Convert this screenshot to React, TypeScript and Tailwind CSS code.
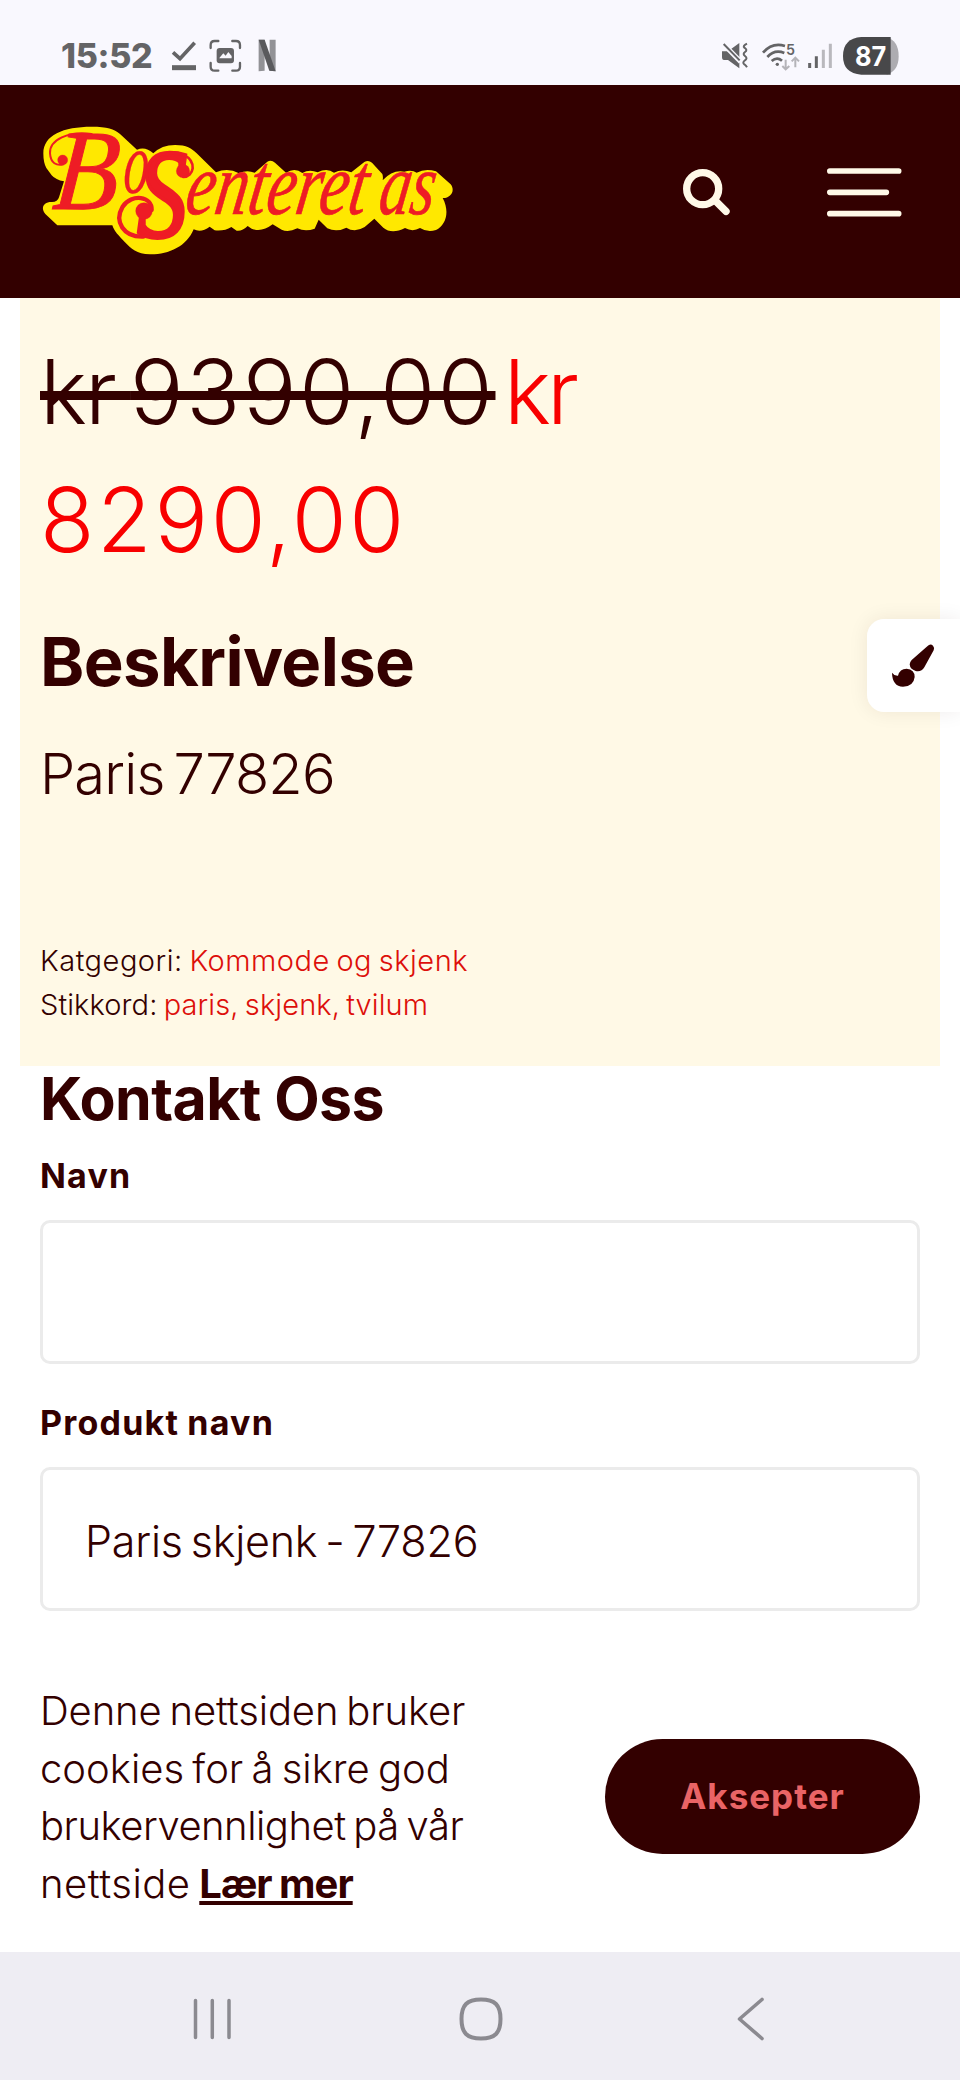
import { ReactNode } from "react"

function StatusBar() {
  return (
    <div className="flex h-[85px] items-center justify-between bg-[#f9f8fe] pt-[26px] pr-[60px] pl-[61px]">
      <div className="flex items-center">
        <span className="w-[109px] text-[34px] leading-[36px] font-extrabold tracking-[-0.3px] text-[#646466]">15:52</span>
        <svg viewBox="390 50 325 110" className="h-[36.7px] w-[108.3px]" fill="none">
          <path d="M399 96 L420 115 L464 67" stroke="#646466" strokeWidth="11" />
          <path d="M396 142 H468" stroke="#646466" strokeWidth="15" />
          <path
            d="M512 83 V74 Q512 62 524 62 H535 M577 62 H588 Q600 62 600 74 V83 M600 128 V139 Q600 151 588 151 H577 M535 151 H524 Q512 151 512 139 V128"
            stroke="#646466"
            strokeWidth="7"
            strokeLinecap="round"
          />
          <rect x="530" y="83" width="52" height="46" rx="9" fill="#646466" />
          <path d="M538 113 L550 99 L557 106 L565 95 L575 107 V114 H538 Z" fill="#f9f8fe" />
          <path d="M656 58 H674 V151 L656 153 Z" fill="#929296" />
          <path d="M689 58 H707 V153 L689 151 Z" fill="#929296" />
          <path d="M656 58 H674 L707 153 L688 151 Z" fill="#5a5a5d" />
        </svg>
      </div>
      <svg viewBox="60 45 540 120" className="h-[40px] w-[180px]" fill="none">
        <path d="M66 91 H84 L118 66 V142 L84 117 H72 Q66 117 66 108 Z" fill="#646466" />
        <path d="M70 69 L122 122" stroke="#f9f8fe" strokeWidth="15" />
        <path d="M71 69 L119 118" stroke="#646466" strokeWidth="6" />
        <path
          d="M141 68 Q127 75 133 80 Q144 87 135 93 Q127 99 135 105 Q144 112 135 118 Q126 125 133 130 Q138 134 141 139"
          stroke="#646466"
          strokeWidth="6"
        />
        <path d="M189 95 Q217 63 255 75" stroke="#646466" strokeWidth="8" />
        <path d="M202 108 Q224 84 253 96" stroke="#646466" strokeWidth="8" />
        <path d="M215 120 Q231 106 246 119" stroke="#646466" strokeWidth="8" />
        <circle cx="232" cy="130" r="5" fill="#646466" />
        <text x="258" y="102" fontSize="44" fontWeight="600" textLength="27" lengthAdjust="spacingAndGlyphs" fill="#646466">5</text>
        <path d="M257 116 V144 M247 135 L257 145 L268 135" stroke="#b4b3b8" strokeWidth="6" />
        <path d="M286 139 V110 M275 121 L286 110 L297 121" stroke="#b4b3b8" strokeWidth="6" />
        <path d="M329 126 V141 M349 106 V141" stroke="#646466" strokeWidth="9" />
        <path d="M370 86 V141 M391 68 V141" stroke="#b9b8bd" strokeWidth="9" />
        <path d="M560 49 Q596 60 596 105 Q596 150 560 161 Z" fill="#adacb1" />
        <path d="M484 48 H572 V161 H484 Q429 157 429 105 Q429 52 484 48 Z" fill="#48484a" />
        <text x="465" y="135" fontSize="80" fontWeight="700" textLength="94" lengthAdjust="spacingAndGlyphs" fill="#ffffff">87</text>
      </svg>
    </div>
  )
}

function Logo() {
  return (
    <svg viewBox="0 0 1350 480" className="h-[160px] w-[450px]" fontFamily="'Liberation Serif', serif" fontStyle="italic">
      {/* yellow backing behind the lettering */}
      <path
        fill="#ffe800"
        d="M70 130 C70 75 130 50 215 50 C262 50 282 57 300 72 L351 119 Q376 108 400 130 Q425 105 465 105 C500 105 515 115 530 130 L588 187 Q624 171 657 190 Q680 178 704 188 L742 155 Q754 149 765 158 L798 188 Q825 172 847 189 Q868 177 893 187 Q921 172 942 188 Q966 176 994 187 L1033 156 Q1045 149 1056 158 L1087 192 Q1090 201 1088 211 Q1118 178 1153 185 Q1176 179 1190 188 Q1215 175 1248 184 L1292 223 C1307 242 1292 265 1268 264 C1290 305 1278 345 1248 360 Q1222 368 1200 354 Q1178 367 1155 354 Q1115 374 1090 353 L1063 326 L1034 351 Q1005 369 979 353 Q950 368 922 355 L896 329 L884 356 Q856 366 832 355 Q805 368 785 359 L758 343 Q725 368 695 356 L683 348 Q667 364 650 362 L634 351 Q614 364 584 361 L569 350 Q544 369 521 358 C500 410 445 434 390 433 C350 432 333 416 315 397 C295 375 283 365 277 346 H112 L76 312 C60 293 72 275 96 276 Q113 276 117 262 L132 214 Q107 210 95 196 L79 174 Q70 158 70 130 Z"
      />
      <g fill="#ee1c25" stroke="#ee1c25">
        <text transform="translate(94 297) skewX(-5)" fontSize="344" strokeWidth="3" textLength="196" lengthAdjust="spacingAndGlyphs">B</text>
        <text transform="translate(307 250) skewX(-4)" fontSize="266" strokeWidth="1" textLength="76" lengthAdjust="spacingAndGlyphs">o</text>
        <text transform="translate(352 381)" fontSize="380" strokeWidth="12" textLength="150" lengthAdjust="spacingAndGlyphs">S</text>
        <text transform="translate(490 313) skewX(-9)" fontSize="266" strokeWidth="2" textLength="542" lengthAdjust="spacingAndGlyphs">enteret</text>
        <text transform="translate(1070 313) skewX(-9)" fontSize="266" strokeWidth="2" textLength="166" lengthAdjust="spacingAndGlyphs">as</text>
        <circle cx="128" cy="150" r="15" />
        <circle cx="489" cy="183" r="20" />
        <circle cx="372" cy="303" r="25" />
      </g>
      <g fill="none" stroke="#ee1c25" strokeLinecap="round">
        <path d="M215 72 C145 62 88 90 90 130 C92 160 110 168 130 163" strokeWidth="6" />
        <path d="M440 133 C475 118 520 140 518 175 C516 190 505 201 490 201" strokeWidth="8" />
        <path d="M395 300 C397 258 335 250 308 290 C282 335 310 382 370 380" strokeWidth="13" />
      </g>
    </svg>
  )
}

function Header() {
  return (
    <header className="flex h-[213px] items-start bg-[#330000] pt-[25px] pr-[58px] pl-5">
      <Logo />
      <div className="ml-auto flex items-center pt-[57px]">
        <svg viewBox="64 84 152 150" className="mr-[95px] h-[50px] w-[50.7px]" fill="none" stroke="#fff9e8">
          <circle cx="129" cy="149" r="48" strokeWidth="22" />
          <path d="M166 184 L199 217" strokeWidth="22" strokeLinecap="round" />
        </svg>
        <svg viewBox="500 80 225 152" className="h-[50.7px] w-[75px]" stroke="#fff9e8" strokeWidth="17" strokeLinecap="round">
          <path d="M508.500 92 H715 M508.500 156 H678 M508.500 220 H715" />
        </svg>
      </div>
    </header>
  )
}

function Price({ amount }: { amount: string }) {
  return <span className="tracking-[2.700px]">{amount}</span>
}

function ProductInfo() {
  return (
    <section className="mx-5 h-[768px] bg-[#fff9e6] px-5 pt-[30px]">
      <div className="text-[89px] leading-[128px] font-[350] whitespace-nowrap">
        <div className="flex">
          <del className="w-[464px] tracking-[-2px] decoration-[9px] [word-spacing:-8px]">
            kr <Price amount="9390,00" />
          </del>
          <ins className="tracking-[-4px] text-[#f80000] no-underline">kr</ins>
        </div>
        <div className="text-[#f80000]">
          <Price amount="8290,00" />
        </div>
      </div>
      <h2 className="mt-[48px] text-[67px] leading-[60px] font-bold tracking-[-0.6px]">Beskrivelse</h2>
      <p className="mt-[40px] text-[56px] leading-[84px] font-[350] tracking-[-0.8px] [word-spacing:-6px]">Paris 77826</p>
      <div className="mt-[123px] text-[29px] leading-[43.500px] font-[350] [word-spacing:-2px]">
        <div className="tracking-[0.5px]">
          Katgegori: <Tag>Kommode og skjenk</Tag>
        </div>
        <div className="tracking-[0.1px]">
          Stikkord: <Tag>paris, skjenk, tvilum</Tag>
        </div>
      </div>
    </section>
  )
}

function Tag({ children }: { children: ReactNode }) {
  return <a className="text-[#dd0f0a]">{children}</a>
}

function Field({ label, value }: { label: string; value: string }) {
  return (
    <label className="block">
      <span className="block text-[34px] leading-[44px] font-bold tracking-[1.2px] [word-spacing:-1px]">{label}</span>
      <span className="mt-[22px] flex h-[144px] items-center rounded-[10px] border-[3px] border-[#ebebeb] bg-white px-[42px] pt-[4px] text-[43px] leading-[56px] font-[350] tracking-[-0.2px] [word-spacing:-4px]">
        {value}
      </span>
    </label>
  )
}

function BrushTab() {
  return (
    <div className="absolute top-[321px] right-0 flex h-[93px] w-[93px] items-center rounded-l-[17px] bg-white pl-[24px] shadow-[0_0_20px_rgba(51,0,0,0.08)]">
      <svg viewBox="154 160 132 134" className="h-[44.700px] w-[44px]" fill="#330000">
        <path d="M263 170 Q272 160 280 168 Q285 173 282 182 L254 233 Q245 248 228 244 Q211 239 210 224 Q211 216 216 211 Z" />
        <path d="M157 249 Q164 259 175 258 Q180 237 201 237 Q225 239 225 262 Q222 290 190 291 Q158 290 157 249 Z" />
      </svg>
    </div>
  )
}

function CookieBar() {
  return (
    <div className="flex flex-1 items-start justify-between px-10 pt-[52px]">
      <p className="text-[40px] leading-[57.500px] font-[350] whitespace-nowrap [word-spacing:-3px]">
        <span className="block tracking-[-0.15px]">Denne nettsiden bruker</span>
        <span className="block tracking-[0px]">cookies for å sikre god</span>
        <span className="block tracking-[-0.5px]">brukervennlighet på vår</span>
        <span className="block tracking-[0.5px]">
          nettside{" "}
          <a className="font-bold tracking-[-1px] underline decoration-[4px] underline-offset-[3px] [word-spacing:-1px]">Lær mer</a>
        </span>
      </p>
      <button className="mt-[57px] h-[115px] w-[315px] rounded-full bg-[#330000] text-[35px] font-bold tracking-[1px] text-[#ea6466]">
        Aksepter
      </button>
    </div>
  )
}

function NavBar() {
  return (
    <nav className="flex h-[128px] items-center bg-[#eeedf3] pt-[5px] pl-[193px]">
      <svg viewBox="0 0 38 42" className="h-[42px] w-[38px]" stroke="#8b8a90" strokeWidth="3.500" strokeLinecap="round">
        <path d="M2.500 2.500 V39.500 M19.300 2.500 V39.500 M36 2.500 V39.500" />
      </svg>
      <svg viewBox="0 0 44 44" className="ml-[228px] h-[44px] w-[44px]" fill="none" stroke="#8b8a90" strokeWidth="4">
        <path d="M22 2.500 C36 2.500 41.500 8 41.500 22 C41.500 36 36 41.500 22 41.500 C8 41.500 2.500 36 2.500 22 C2.500 8 8 2.500 22 2.500 Z" />
      </svg>
      <svg viewBox="0 0 28 44" className="ml-[234px] h-[44px] w-[28px]" fill="none" stroke="#8b8a90" strokeWidth="3.600" strokeLinecap="round" strokeLinejoin="round">
        <path d="M25 2.500 L2.500 22 L25 41.500" />
      </svg>
    </nav>
  )
}

export default function App() {
  return (
    <div className="flex h-[2080px] w-[960px] flex-col overflow-hidden bg-white font-['Inter',sans-serif] text-[#330000]">
      <StatusBar />
      <Header />
      <main className="relative h-[1332px]">
        <ProductInfo />
        <BrushTab />
        <section className="px-10">
          <h3 className="text-[59px] leading-[66px] font-bold tracking-[-0.6px]">Kontakt Oss</h3>
          <div className="mt-[22px] flex flex-col gap-[37px]">
            <Field label="Navn" value="" />
            <Field label="Produkt navn" value="Paris skjenk - 77826" />
          </div>
        </section>
      </main>
      <CookieBar />
      <NavBar />
    </div>
  )
}
